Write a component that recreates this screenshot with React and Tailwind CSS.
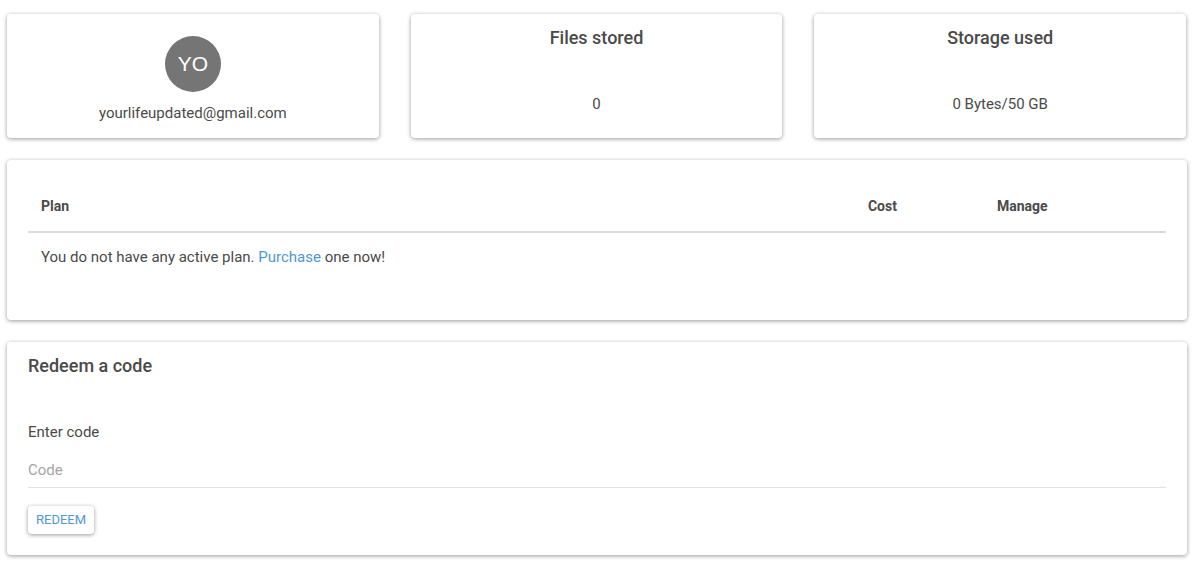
import React, { useState } from 'react';
import clsx from 'clsx';

const Card = ({ className, children }) => (
    <section className={clsx("bg-white rounded-sm shadow-[0_1px_4px_rgba(0,0,0,0.4)]", className)}>
        {children}
    </section>
);

const StatCard = ({ title, value }) => (
    <Card className="flex flex-col items-center px-5 pt-3 pb-5">
        <h2 className="text-lg leading-6 font-medium">{title}</h2>
        <p className="mt-11">{value}</p>
    </Card>
);

const App = () => {
    const [code, setCode] = useState('');

    const stats = [
        { title: 'Files stored', value: '0' },
        { title: 'Storage used', value: '0 Bytes/50 GB' },
    ];

    return (
        <main className="flex flex-col gap-[22px] pl-[7px] pr-[13px] py-3.5 bg-white text-[#4a4a4a] text-[15px] leading-5 font-['Roboto',sans-serif]">
            <div className="grid grid-cols-3 gap-8 pr-px">
                <Card className="flex flex-col items-center px-5 pt-[22px] pb-[15px]">
                    <div className="flex items-center justify-center size-14 rounded-full bg-[#757575] text-white text-[21px] font-['Liberation_Sans',sans-serif]">
                        YO
                    </div>
                    <p className="mt-[11px]">yourlifeupdated@gmail.com</p>
                </Card>
                {stats.map((stat) => (
                    <StatCard key={stat.title} title={stat.title} value={stat.value} />
                ))}
            </div>

            <Card className="px-[21px] pt-6 pb-[41px]">
                <table className="w-full table-fixed text-left">
                    <thead className="text-sm leading-5">
                        <tr className="border-b-2 border-[#dbdbdb]">
                            <th className="px-[13px] pt-3 pb-[15px] font-bold">Plan</th>
                            <th className="w-[129px] px-[13px] pt-3 pb-[15px] font-bold">Cost</th>
                            <th className="w-[16%] px-[13px] pt-3 pb-[15px] font-bold">Manage</th>
                        </tr>
                    </thead>
                    <tbody>
                        <tr>
                            <td colSpan={3} className="px-[13px] pt-3.5 pb-3">
                                You do not have any active plan.{' '}
                                <a href="#purchase" className="text-[#4f97d3]">Purchase</a> one now!
                            </td>
                        </tr>
                    </tbody>
                </table>
            </Card>

            <Card className="px-[21px] pt-3 pb-[21px]">
                <h2 className="text-lg leading-6 font-medium">Redeem a code</h2>
                <form className="flex flex-col items-start mt-11" onSubmit={(e) => e.preventDefault()}>
                    <label htmlFor="code">Enter code</label>
                    <input
                        id="code"
                        type="text"
                        value={code}
                        onChange={(e) => setCode(e.target.value)}
                        placeholder="Code"
                        className="w-full h-9 mt-2.5 border-b border-[#e2e2e2] outline-none placeholder:text-[#a5a5a5] focus:border-[#4f97d3]"
                    />
                    <button
                        type="submit"
                        className="mt-[18px] px-2 py-1 rounded-sm bg-white text-[#4f97d3] text-[13px] leading-5 uppercase shadow-[0_1px_4px_rgba(0,0,0,0.4)]"
                    >
                        Redeem
                    </button>
                </form>
            </Card>
        </main>
    );
};

export default App;
